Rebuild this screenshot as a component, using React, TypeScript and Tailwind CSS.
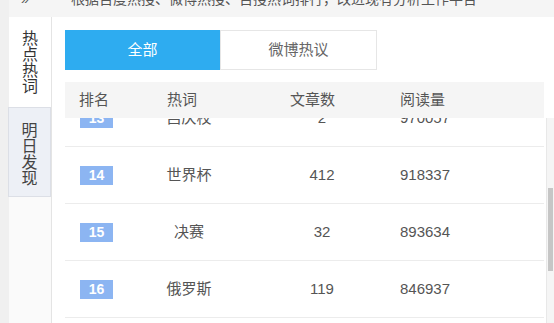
import React from "react";

const rows = [
  { rank: 13, word: "吕庆校", count: "2", reads: "970057" },
  { rank: 14, word: "世界杯", count: "412", reads: "918337" },
  { rank: 15, word: "决赛", count: "32", reads: "893634" },
  { rank: 16, word: "俄罗斯", count: "119", reads: "846937" },
  { rank: 17, word: "法国", count: "87", reads: "801245" },
];

const font = { fontFamily: '"Liberation Sans", "Noto Sans CJK SC", sans-serif' };

export default function App() {
  return (
    <div className="w-[554px] h-[323px] overflow-hidden bg-white flex text-[#555]" style={font}>
      {/* left edge strip */}
      <div className="w-[9px] h-full bg-[#f0f0f0] shrink-0" />

      <div className="flex-1 flex flex-col min-w-0">
        {/* Top hint bar (scrolled, only lower half visible) */}
        <div className="h-[17px] bg-[#f5f5f5] overflow-hidden shrink-0 flex items-start">
          <div className="flex items-center -mt-[8px] text-[14px] leading-[14px] text-[#555] whitespace-nowrap">
            <span className="ml-[12px] w-[50px]">»</span>
            <span>根据百度热搜、微博热搜、百搜热词排行，改进现有分析工作平台</span>
          </div>
        </div>

        <div className="flex flex-1 min-h-0">
          {/* Sidebar */}
          <div className="w-[43px] shrink-0 flex flex-col bg-[#fafafa] border-r border-[#e4e4e4]">
            <div className="h-[90px] bg-white flex justify-center pt-[12px]">
              <div className="w-[16px] text-[16px] leading-[16px] text-[#333] break-all" style={{ fontFamily: '"Noto Sans CJK SC", sans-serif' }}>
                热点热词
              </div>
            </div>
            <div className="h-[90px] bg-[#edf0f6] border border-[#dcdfe6] -ml-px flex justify-center pt-[13px]">
              <div className="w-[16px] text-[16px] leading-[16px] text-[#444] break-all" style={{ fontFamily: '"Noto Sans CJK SC", sans-serif' }}>
                明日发现
              </div>
            </div>
          </div>

          {/* Main */}
          <div className="flex-1 flex flex-col min-w-0 pl-[13px] pt-[13px]">
            {/* Tabs */}
            <div className="flex shrink-0">
              <div className="w-[155px] h-[40px] bg-[#2eacf0] text-white text-[15px] flex items-center justify-center">
                全部
              </div>
              <div className="w-[157px] h-[40px] bg-white border border-[#e6e6e6] text-[#666] text-[15px] flex items-center justify-center">
                微博热议
              </div>
            </div>

            <div className="flex flex-1 min-h-0 mt-[12px]">
              <div className="flex-1 flex flex-col min-w-0">
                {/* Header */}
                <div className="h-[36px] bg-[#f5f5f5] flex items-center text-[15px] text-[#555] shrink-0">
                  <span className="ml-[14px] w-[88px]">排名</span>
                  <span className="w-[123px]">热词</span>
                  <span className="w-[110px]">文章数</span>
                  <span>阅读量</span>
                </div>

                {/* Body */}
                <div className="flex-1 overflow-hidden">
                  <div className="-mt-[28px]">
                    {rows.map((r) => (
                      <div key={r.rank} className="h-[57px] border-b border-[#ececec] flex items-center text-[15px] text-[#555]">
                        <span className="ml-[15px] w-[33px] h-[19px] bg-[#8cb5f2] text-white text-[14px] font-bold flex items-center justify-center">
                          {r.rank}
                        </span>
                        <span className="ml-[36px] w-[80px] text-center">{r.word}</span>
                        <span className="ml-[68px] w-[50px] text-center">{r.count}</span>
                        <span className="ml-[53px]">{r.reads}</span>
                      </div>
                    ))}
                  </div>
                </div>
              </div>

              {/* Scrollbar */}
              <div className="w-[8px] ml-[2px] mt-[36px] bg-[#f5f5f5] border-l border-[#e8e8e8] flex flex-col shrink-0">
                <div className="h-[70px]" />
                <div className="h-[83px] bg-[#c6c6c6] mx-px" />
              </div>
            </div>
          </div>
        </div>
      </div>
    </div>
  );
}
